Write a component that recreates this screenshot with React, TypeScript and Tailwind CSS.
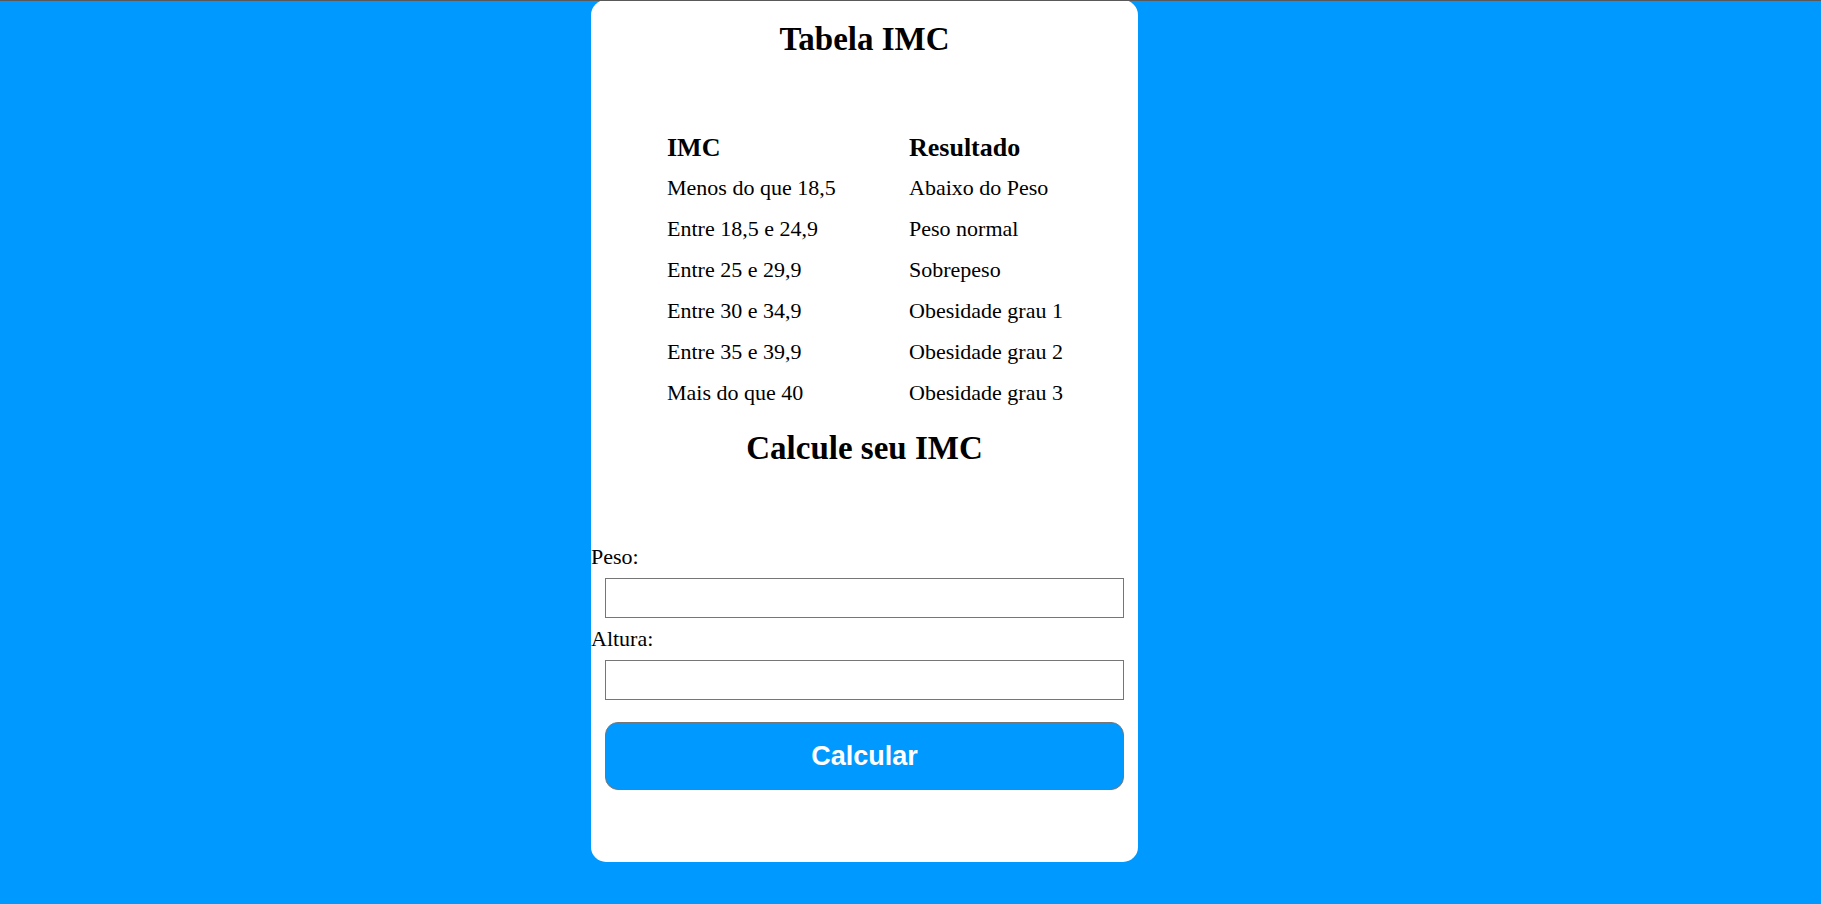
import React from "react";

const rows: [string, string][] = [
  ["Menos do que 18,5", "Abaixo do Peso"],
  ["Entre 18,5 e 24,9", "Peso normal"],
  ["Entre 25 e 29,9", "Sobrepeso"],
  ["Entre 30 e 34,9", "Obesidade grau 1"],
  ["Entre 35 e 39,9", "Obesidade grau 2"],
  ["Mais do que 40", "Obesidade grau 3"],
];

export default function App() {
  return (
    <div
      className="relative min-h-screen w-full bg-[#0099ff] text-black"
      style={{ fontFamily: '"Liberation Serif", "Times New Roman", serif' }}
    >
      <div className="absolute left-0 top-0 z-10 h-px w-full bg-[#595959]" />
      <div className="ml-[591px] flex w-[547px] flex-col rounded-[15px] bg-white pb-[72px]">
        <h1 className="mt-[20px] text-center text-[33px] font-bold leading-[38px]">
          Tabela IMC
        </h1>

        <div className="mx-auto mt-[75px] grid w-[395px] grid-cols-[242px_153px]">
          <div className="h-[34px] text-[26px] font-bold leading-[29px]">IMC</div>
          <div className="h-[34px] text-[26px] font-bold leading-[29px]">Resultado</div>
          {rows.map(([a, b]) => (
            <React.Fragment key={a}>
              <div className="whitespace-nowrap py-2 text-[22px] leading-[25px]">{a}</div>
              <div className="whitespace-nowrap py-2 text-[22px] leading-[25px]">{b}</div>
            </React.Fragment>
          ))}
        </div>

        <h1 className="mt-[16px] text-center text-[33px] font-bold leading-[38px]">
          Calcule seu IMC
        </h1>

        <label className="mt-[77px] block text-[22px] leading-[25px]">Peso:</label>
        <input
          type="text"
          className="mx-auto mt-[9px] block h-[40px] w-[519px] border border-[#767676] bg-white px-1 text-[16px] outline-none"
        />
        <label className="mt-[8px] block text-[22px] leading-[25px]">Altura:</label>
        <input
          type="text"
          className="mx-auto mt-[9px] block h-[40px] w-[519px] border border-[#767676] bg-white px-1 text-[16px] outline-none"
        />
        <button
          type="button"
          className="mx-auto mt-[22px] block h-[68px] w-[519px] rounded-[13px] border border-[#767676] bg-[#0099ff] text-[27px] font-bold text-white"
          style={{ fontFamily: '"Liberation Sans", Arial, sans-serif' }}
        >
          Calcular
        </button>
      </div>
    </div>
  );
}
